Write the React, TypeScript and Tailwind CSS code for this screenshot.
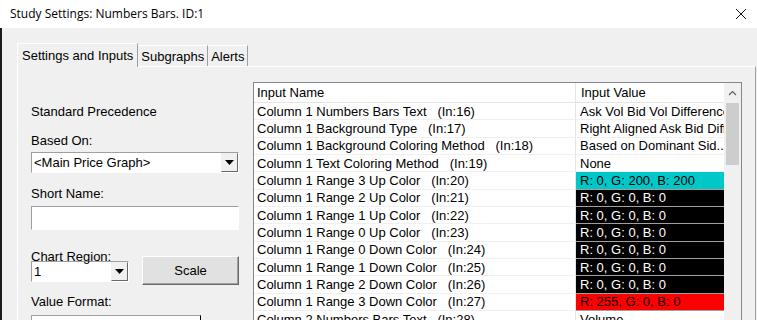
import React from "react";

type Row = { name: string; value: string; kind?: "cyan" | "black" | "red" };

const rows: Row[] = [
  { name: "Column 1 Numbers Bars Text   (In:16)", value: "Ask Vol Bid Vol Difference" },
  { name: "Column 1 Background Type   (In:17)", value: "Right Aligned Ask Bid Difference" },
  { name: "Column 1 Background Coloring Method   (In:18)", value: "Based on Dominant Sid..." },
  { name: "Column 1 Text Coloring Method   (In:19)", value: "None" },
  { name: "Column 1 Range 3 Up Color   (In:20)", value: "R: 0, G: 200, B: 200", kind: "cyan" },
  { name: "Column 1 Range 2 Up Color   (In:21)", value: "R: 0, G: 0, B: 0", kind: "black" },
  { name: "Column 1 Range 1 Up Color   (In:22)", value: "R: 0, G: 0, B: 0", kind: "black" },
  { name: "Column 1 Range 0 Up Color   (In:23)", value: "R: 0, G: 0, B: 0", kind: "black" },
  { name: "Column 1 Range 0 Down Color   (In:24)", value: "R: 0, G: 0, B: 0", kind: "black" },
  { name: "Column 1 Range 1 Down Color   (In:25)", value: "R: 0, G: 0, B: 0", kind: "black" },
  { name: "Column 1 Range 2 Down Color   (In:26)", value: "R: 0, G: 0, B: 0", kind: "black" },
  { name: "Column 1 Range 3 Down Color   (In:27)", value: "R: 255, G: 0, B: 0", kind: "red" },
  { name: "Column 2 Numbers Bars Text   (In:28)", value: "Volume" },
];

function DropArrow() {
  return (
    <svg width="9" height="5" viewBox="0 0 9 5">
      <path d="M0 0 L9 0 L4.5 5 Z" fill="#000" />
    </svg>
  );
}

function Combo({ text, width }: { text: string; width: string }) {
  return (
    <div
      className={`flex h-[21px] shrink-0 ${width} border border-t-[#a0a0a0] border-l-[#a0a0a0] border-b-white border-r-white bg-white`}
    >
      <div className="flex min-w-0 flex-1 items-center pl-[2px] text-[13px] leading-none text-black whitespace-nowrap overflow-hidden">
        {text}
      </div>
      <div className="flex w-[17px] items-center justify-center border border-t-[#f0f0f0] border-l-[#f0f0f0] border-b-[#696969] border-r-[#696969] bg-[#f0f0f0]">
        <DropArrow />
      </div>
    </div>
  );
}

export default function App() {
  const font = { fontFamily: '"Liberation Sans", Arial, sans-serif' };
  return (
    <div className="w-[757px] h-[320px] overflow-hidden bg-[#f0f0f0] text-black" style={font}>
      {/* Title bar */}
      <div className="flex h-[28px] items-center bg-white pl-[10px] pr-[12px]">
        <div className="flex-1 text-[12px] leading-none" style={{ fontFamily: '"Open Sans", "Liberation Sans", sans-serif' }}>
          Study Settings: Numbers Bars. ID:1
        </div>
        <svg width="12" height="12" viewBox="0 0 12 12" className="mr-[-2px]">
          <path d="M1 1 L11 11 M11 1 L1 11" stroke="#111" strokeWidth="1" />
        </svg>
      </div>

      {/* Body */}
      <div className="flex h-[292px] flex-col border-l-2 border-l-[#1a1a1a] pl-[15px] pr-[1px]">
        {/* Tabs */}
        <div className="mt-[15px] flex h-[23px] shrink-0 items-end text-[13px] leading-none">
          <div className="relative z-10 mb-[-1px] flex h-[24px] items-center border-l border-t border-white border-r border-r-[#a0a0a0] bg-[#f0f0f0] px-[4px]">
            Settings and Inputs
          </div>
          <div className="flex h-[21px] items-center border-r border-r-[#a0a0a0] border-t border-t-white px-[3px]">
            Subgraphs
          </div>
          <div className="flex h-[21px] items-center border-r border-r-[#a0a0a0] border-t border-t-white px-[3px]">
            Alerts
          </div>
        </div>

        {/* Panel */}
        <div className="flex min-h-0 flex-1 overflow-hidden border-l border-t border-white border-r border-r-[#a0a0a0]">
          {/* Left column */}
          <div className="flex w-[235px] shrink-0 flex-col pl-[13px] text-[13px] leading-[16px]">
            <div className="mt-[37px] shrink-0">Standard Precedence</div>
            <div className="mt-[13px] shrink-0">Based On:</div>
            <div className="mt-[3px] shrink-0">
              <Combo text="<Main Price Graph>" width="w-[208px]" />
            </div>
            <div className="mt-[13px] shrink-0">Short Name:</div>
            <div className="mt-[4px] h-[24px] w-[208px] shrink-0 border border-t-[#a0a0a0] border-l-[#a0a0a0] border-b-white border-r-white bg-white" />
            <div className="mt-[19px] flex shrink-0 items-start">
              <div className="flex flex-col">
                <div className="relative z-10">Chart Region:</div>
                <div className="mt-[-4px]">
                  <Combo text="1" width="w-[98px]" />
                </div>
              </div>
              <div className="ml-[13px] mt-[7px] flex h-[29px] w-[97px] shrink-0 items-center justify-center border border-t-white border-l-white border-b-[#696969] border-r-[#696969] bg-[#e1e1e1] shadow-[inset_-1px_-1px_0_#a0a0a0]">
                Scale
              </div>
            </div>
            <div className="mt-[9px] shrink-0">Value Format:</div>
            <div className="mt-[5px] h-[20px] w-[170px] shrink-0 border border-t-[#a0a0a0] border-l-[#a0a0a0] bg-white" />
          </div>

          {/* Table */}
          <div className="mt-[15px] flex h-[300px] w-[489px] shrink-0 overflow-hidden border border-[#828790] bg-white text-[13px] leading-none">
            <div className="flex min-w-0 flex-1 flex-col">
              <div className="flex h-[20px] shrink-0 border-b border-b-[#e5e5e5] bg-white">
                <div className="flex w-[322px] shrink-0 items-center border-r border-r-[#e5e5e5] pl-[3px]">Input Name</div>
                <div className="flex min-w-0 flex-1 items-center pl-[5px]">Input Value</div>
              </div>
              {rows.map((r, i) => {
                const valCls =
                  r.kind === "cyan"
                    ? "bg-[#00c8c8] text-black border-b-[#a0a0a0]"
                    : r.kind === "black"
                    ? "bg-black text-white border-b-[#a0a0a0]"
                    : r.kind === "red"
                    ? "bg-[#ff0000] text-black border-b-[#a0a0a0]"
                    : "bg-white text-black border-b-[#f0f0f0]";
                return (
                  <div key={i} className="flex h-[17.33px] shrink-0">
                    <div className="flex w-[322px] shrink-0 items-center overflow-hidden whitespace-pre border-b border-b-[#f0f0f0] border-r border-r-[#e5e5e5] pl-[3px]">
                      {r.name}
                    </div>
                    <div className={`flex min-w-0 flex-1 items-center overflow-hidden whitespace-nowrap border-b pl-[4px] ${valCls}`}>
                      {r.value}
                    </div>
                  </div>
                );
              })}
            </div>
            {/* Scrollbar */}
            <div className="flex w-[17px] shrink-0 flex-col bg-[#f0f0f0]">
              <div className="flex h-[20px] items-center justify-center">
                <svg width="9" height="6" viewBox="0 0 9 6">
                  <path d="M1 5 L4.5 1.5 L8 5" stroke="#606060" strokeWidth="1.2" fill="none" />
                </svg>
              </div>
              <div className="mx-[2px] h-[62px] bg-[#cdcdcd]" />
            </div>
          </div>
        </div>
      </div>
    </div>
  );
}
